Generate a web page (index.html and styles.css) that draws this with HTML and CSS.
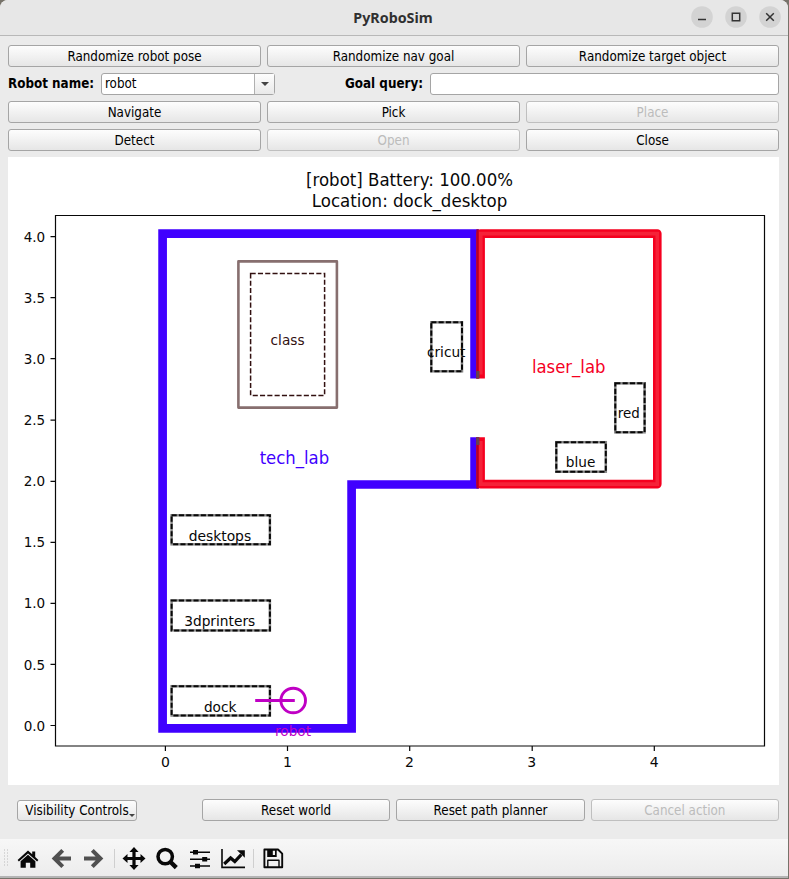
FILE: index.html
```html
<!DOCTYPE html>
<html lang="en">
<head>
<meta charset="utf-8">
<title>PyRoboSim</title>
<link rel="stylesheet" href="styles.css">
</head>
<body>
<div class="window">
  <header class="titlebar">
    <h1 class="title">PyRoboSim</h1>
    <div class="winctl">
      <svg viewBox="0 0 22 22"><circle cx="11" cy="11" r="10.8"/><path d="M7 13.5h8"/></svg>
      <svg viewBox="0 0 22 22"><circle cx="11" cy="11" r="10.8"/><path d="M7.3 7.3h7.4v7.4H7.3z"/></svg>
      <svg viewBox="0 0 22 22"><circle cx="11" cy="11" r="10.8"/><path d="M7.2 7.2l7.6 7.6M14.8 7.2l-7.6 7.6"/></svg>
    </div>
  </header>

  <main class="content">
    <div class="row">
      <button class="btn">Randomize robot pose</button>
      <button class="btn">Randomize nav goal</button>
      <button class="btn">Randomize target object</button>
    </div>
    <div class="fields">
      <label class="label">Robot name:</label>
      <div class="combo"><span class="combo-text">robot</span><span class="combo-arrow"></span></div>
      <label class="label label-goal">Goal query:</label>
      <div class="input"></div>
    </div>
    <div class="row">
      <button class="btn">Navigate</button>
      <button class="btn">Pick</button>
      <button class="btn" disabled>Place</button>
    </div>
    <div class="row">
      <button class="btn">Detect</button>
      <button class="btn" disabled>Open</button>
      <button class="btn">Close</button>
    </div>

    <svg class="figure" viewBox="8 157 771 628">
      <g class="title-text">
        <text x="409.5" y="186.3" textLength="207" lengthAdjust="spacingAndGlyphs">[robot] Battery: 100.00%</text>
        <text x="409.5" y="207.3" textLength="195.5" lengthAdjust="spacingAndGlyphs">Location: dock_desktop</text>
      </g>
      <path class="wall-blue" d="M474.6 378.5V233.6H162.6V728.4H351.6V484.5H474.6V437.3"/>
      <path class="wall-red" d="M480.6 378.5V233.6H657.3V484.1H480.6V437.3"/>
      <path class="wall-red-core" d="M480.8 374.6V233.6H657.3V484.1H480.8V441"/>
      <path class="wall-seam" d="M477.5 229.3V378.5M477.5 437.3V488.5"/>
      <path class="hall" d="M477.8 371V378.5M477.8 437.3V445"/>
      <rect class="desk-outer" x="238.4" y="261.4" width="98.5" height="146.2"/>
      <rect class="desk-inner" x="250.6" y="273.4" width="74" height="122"/>
      <g class="loc-under">
        <rect x="431.3" y="322.3" width="30.7" height="49"/>
        <rect x="615.3" y="383.3" width="29.3" height="49"/>
        <rect x="556.3" y="442.2" width="49.5" height="29.5"/>
        <rect x="171.6" y="515.3" width="98.3" height="29"/>
        <rect x="171.6" y="600.4" width="98.3" height="30"/>
        <rect x="171.6" y="686.2" width="98.3" height="29.3"/>
      </g>
      <g class="loc">
        <rect x="431.3" y="322.3" width="30.7" height="49"/>
        <rect x="615.3" y="383.3" width="29.3" height="49"/>
        <rect x="556.3" y="442.2" width="49.5" height="29.5"/>
        <rect x="171.6" y="515.3" width="98.3" height="29"/>
        <rect x="171.6" y="600.4" width="98.3" height="30"/>
        <rect x="171.6" y="686.2" width="98.3" height="29.3"/>
      </g>
      <g class="names">
        <text class="brown" x="287.6" y="345" textLength="34" lengthAdjust="spacingAndGlyphs">class</text>
        <text x="446.2" y="357" textLength="38.5" lengthAdjust="spacingAndGlyphs">cricut</text>
        <text x="628.7" y="418" textLength="22" lengthAdjust="spacingAndGlyphs">red</text>
        <text x="580.6" y="467" textLength="29.5" lengthAdjust="spacingAndGlyphs">blue</text>
        <text x="219.9" y="541" textLength="62.5" lengthAdjust="spacingAndGlyphs">desktops</text>
        <text x="219.7" y="626" textLength="71" lengthAdjust="spacingAndGlyphs">3dprinters</text>
        <text x="220.2" y="712" textLength="32.5" lengthAdjust="spacingAndGlyphs">dock</text>
        <text class="magenta" x="293" y="736" textLength="36" lengthAdjust="spacingAndGlyphs">robot</text>
      </g>
      <g class="rooms">
        <text class="blue" x="294.4" y="463.8" textLength="69.5" lengthAdjust="spacingAndGlyphs">tech_lab</text>
        <text class="red" x="568.7" y="373" textLength="73.5" lengthAdjust="spacingAndGlyphs">laser_lab</text>
      </g>
      <circle class="robot" cx="293.2" cy="700.5" r="12.3"/>
      <path class="robot" d="M255.2 700.5H294.8"/>
      <path class="axes" d="M55.5 215.5H764.5V746H55.5Z"/>
      <path class="axes" d="M50.5 236.6h5M50.5 297.6h5M50.5 358.6h5M50.5 420.2h5M50.5 481.3h5M50.5 542.3h5M50.5 603.4h5M50.5 664.4h5M50.5 725.5h5M165.4 746v5M287.5 746v5M409.7 746v5M532.2 746v5M654.3 746v5"/>
      <g class="ticks-y">
        <text x="45.2" y="242" textLength="21.5" lengthAdjust="spacingAndGlyphs">4.0</text>
        <text x="45.2" y="303" textLength="21.5" lengthAdjust="spacingAndGlyphs">3.5</text>
        <text x="45.2" y="364" textLength="21.5" lengthAdjust="spacingAndGlyphs">3.0</text>
        <text x="45.2" y="425.3" textLength="21.5" lengthAdjust="spacingAndGlyphs">2.5</text>
        <text x="45.2" y="486.3" textLength="21.5" lengthAdjust="spacingAndGlyphs">2.0</text>
        <text x="45.2" y="547.3" textLength="21.5" lengthAdjust="spacingAndGlyphs">1.5</text>
        <text x="45.2" y="608.3" textLength="21.5" lengthAdjust="spacingAndGlyphs">1.0</text>
        <text x="45.2" y="669.7" textLength="21.5" lengthAdjust="spacingAndGlyphs">0.5</text>
        <text x="45.2" y="731" textLength="21.5" lengthAdjust="spacingAndGlyphs">0.0</text>
      </g>
      <g class="names">
        <text x="165.4" y="767">0</text>
        <text x="287.5" y="767">1</text>
        <text x="409.5" y="767">2</text>
        <text x="531.7" y="767">3</text>
        <text x="654.3" y="767">4</text>
      </g>
    </svg>

    <div class="bottom">
      <button class="btn tool">Visibility Controls<i class="tool-arrow"></i></button>
      <div class="row bottom-row">
        <button class="btn">Reset world</button>
        <button class="btn">Reset path planner</button>
        <button class="btn" disabled>Cancel action</button>
      </div>
    </div>
  </main>

  <footer class="toolbar">
    <svg viewBox="0 839 300 37">
      <path class="grip" d="M4.5 849.5v18M7.5 849.5v18"/>
      <path d="M28 850.6l4.2 3.7v-2.7h3v5.5l3.2 2.8-1.3 1.5-9.1-7.9-9.1 7.9-1.3-1.5z"/>
      <path d="M28 854.8l7.4 6.5v6.5h-5.2v-5h-4.4v5h-5.2v-6.5z"/>
      <path class="arrow" d="M62.7 850.3L54.5 858.5L62.7 866.7M55.5 858.5H71"/>
      <path class="arrow" d="M92.3 850.3L100.5 858.5L92.3 866.7M99.5 858.5H84"/>
      <path class="sep" d="M114.5 849v19M253.5 849v19"/>
      <path d="M134 847l4.6 5h-3v4.9h4.9v-3l5 4.6-5 4.6v-3h-4.9v4.9h3l-4.6 5-4.6-5h3v-4.9h-4.9v3l-5-4.6 5-4.6v3h4.9V852h-3z"/>
      <circle class="lens" cx="165.2" cy="856.6" r="7.2"/>
      <path class="handle" d="M170.5 862l5.8 5.6"/>
      <path class="slider" d="M190 852.3h20M190 859.2h20M190 866h20"/>
      <path d="M193 850h5v4.6h-5zM202.2 857h5v4.6h-5zM195 863.7h5v4.6h-5z"/>
      <path class="slider" d="M222 849v18.4h23"/>
      <path class="trend" d="M224.2 864l6.4-6 4.2 3.5 6.5-6.8"/>
      <path d="M237 850.3h7.8v7.5z"/>
      <path class="disk" d="M264.4 849.5h13.6l4.2 4.2v13.6h-17.8z"/>
      <path class="disk thin" d="M267.8 867v-6.8h11.2v6.8"/>
      <path d="M267.2 849.5h9.5v7.5h-9.5zM272.8 850.5v4.5h2.2v-4.5z" fill-rule="evenodd"/>
    </svg>
  </footer>
</div>
</body>
</html>
```
FILE: styles.css
```css
* { box-sizing: border-box; }
body {
  margin: 0;
  height: 879px;
  overflow: hidden;
  background: #77736a;
  font-family: "DejaVu Sans Condensed", "DejaVu Sans", sans-serif;
  font-stretch: condensed;
  font-size: 13.3px;
  color: #000;
}
.window {
  width: 788px;
  height: 878px;
  display: flex;
  flex-direction: column;
  background: #ebebeb;
  border-radius: 8px 8px 0 0;
  border-bottom: 2px solid #b4b4b4;
  overflow: hidden;
}
.titlebar {
  height: 36px;
  flex: none;
  display: grid;
  grid-template-columns: 1fr auto 1fr;
  align-items: center;
  background: #e7e7e7;
  border-bottom: 1px solid #b8b8b8;
  padding-right: 7px;
}
.title {
  grid-column: 2;
  margin: 0 0 0 5px;
  font: bold 14.3px "Noto Sans", sans-serif;
  color: #303030;
}
.winctl {
  display: flex;
  justify-content: flex-end;
  gap: 12px;
  margin-top: -1px;
}
.winctl svg { width: 22px; height: 22px; fill: none; stroke: #333; stroke-width: 1.5; }
.winctl circle { fill: #d3d3d3; stroke: none; }
.content {
  flex: none;
  height: 803px;
  padding: 9px 9px 0 8px;
  display: flex;
  flex-direction: column;
  gap: 6px;
}
.row {
  display: grid;
  grid-template-columns: repeat(3, 1fr);
  gap: 6px;
}
.btn {
  height: 22px;
  padding: 1px 0 0;
  border: 1px solid #a5a5a5;
  border-radius: 3px;
  background: linear-gradient(#fdfdfd, #e6e6e6);
  font: inherit;
  line-height: 19px;
  color: #000;
}
.btn:disabled { color: #bcbcbc; border-color: #bfbfbf; }
.fields { display: flex; height: 22px; align-items: center; }
.label { font-weight: bold; width: 93px; white-space: nowrap; line-height: 22px; }
.label-goal { width: 85px; margin-left: 70px; }
.combo, .input {
  height: 22px;
  border: 1px solid #a5a5a5;
  border-radius: 3px;
  background: #fff;
}
.combo { width: 174px; display: flex; }
.combo-text { flex: 1; padding-left: 3px; line-height: 20px; }
.combo-arrow {
  width: 20px;
  border-left: 1px solid #b0b0b0;
  background: linear-gradient(#fdfdfd, #e9e9e9);
  display: flex;
  align-items: center;
  justify-content: center;
}
.combo-arrow::after {
  content: "";
  border: 4px solid transparent;
  border-top-color: #444;
  border-bottom: 0;
}
.input { flex: 1; }
.figure {
  display: block;
  width: 771px;
  height: 628px;
  flex: none;
  background: #fff;
  font-family: "DejaVu Sans", sans-serif;
  font-stretch: normal;
}
.figure text { text-anchor: middle; fill: #080808; }
.title-text, .rooms { font-size: 17px; }
.names, .ticks-y { font-size: 14px; }
.figure .ticks-y text { text-anchor: end; }
.figure .brown { fill: #321010; }
.figure .magenta { fill: #bf00c4; }
.figure .blue { fill: #4000ff; }
.figure .red { fill: #f5001f; }
.figure path, .figure rect, .figure circle { fill: none; }
.wall-blue { stroke: #4000ff; stroke-width: 8.7; }
.wall-red { stroke: #f5001f; stroke-width: 8.6; stroke-linejoin: round; }
.wall-red-core { stroke: #f52238; stroke-width: 3.6; }
.wall-seam { stroke: #b30026; stroke-width: 2.2; }
.hall { stroke: #66414e; stroke-width: 3.4; }
.desk-outer { stroke: #876f6f; stroke-width: 2.6; stroke-linejoin: round; }
.desk-inner { stroke: #321010; stroke-width: 1.5; stroke-dasharray: 5.1 2.2; }
.loc-under { stroke: #888; stroke-width: 2.5; }
.loc { stroke: #080808; stroke-width: 2; stroke-dasharray: 5.1 2.2; }
.robot { stroke: #bf00c4; stroke-width: 2.9; }
.axes { stroke: #080808; stroke-width: 1.2; }
.bottom {
  display: flex;
  align-items: center;
  justify-content: space-between;
  padding-left: 9px;
  margin-top: 8px;
}
.tool { width: 120px; height: 21px; margin-top: 1px; position: relative; padding: 0; white-space: nowrap; }
.tool-arrow {
  position: absolute;
  right: 1px;
  bottom: 3px;
  border: 3px solid transparent;
  border-top-color: #444;
  border-bottom: 0;
}
.bottom-row { width: 577px; }
.toolbar {
  height: 37px;
  flex: none;
  background: linear-gradient(#f7f7f7, #ececec);
}
.toolbar svg { display: block; width: 300px; height: 37px; fill: #080808; }
.toolbar .grip { stroke: #bbb; stroke-width: 1; stroke-dasharray: 1 2; fill: none; }
.toolbar .sep { stroke: #cfcfcf; fill: none; }
.toolbar .arrow { stroke: #505050; stroke-width: 4; fill: none; }
.toolbar .lens { stroke: #080808; stroke-width: 3.5; fill: none; }
.toolbar .handle { stroke: #080808; stroke-width: 4.4; }
.toolbar .slider { stroke: #080808; stroke-width: 1.6; fill: none; }
.toolbar .trend { stroke: #080808; stroke-width: 3.2; fill: none; }
.toolbar .disk { stroke: #080808; stroke-width: 1.9; fill: none; stroke-linejoin: round; }
.toolbar .thin { stroke-width: 1.4; }
```
